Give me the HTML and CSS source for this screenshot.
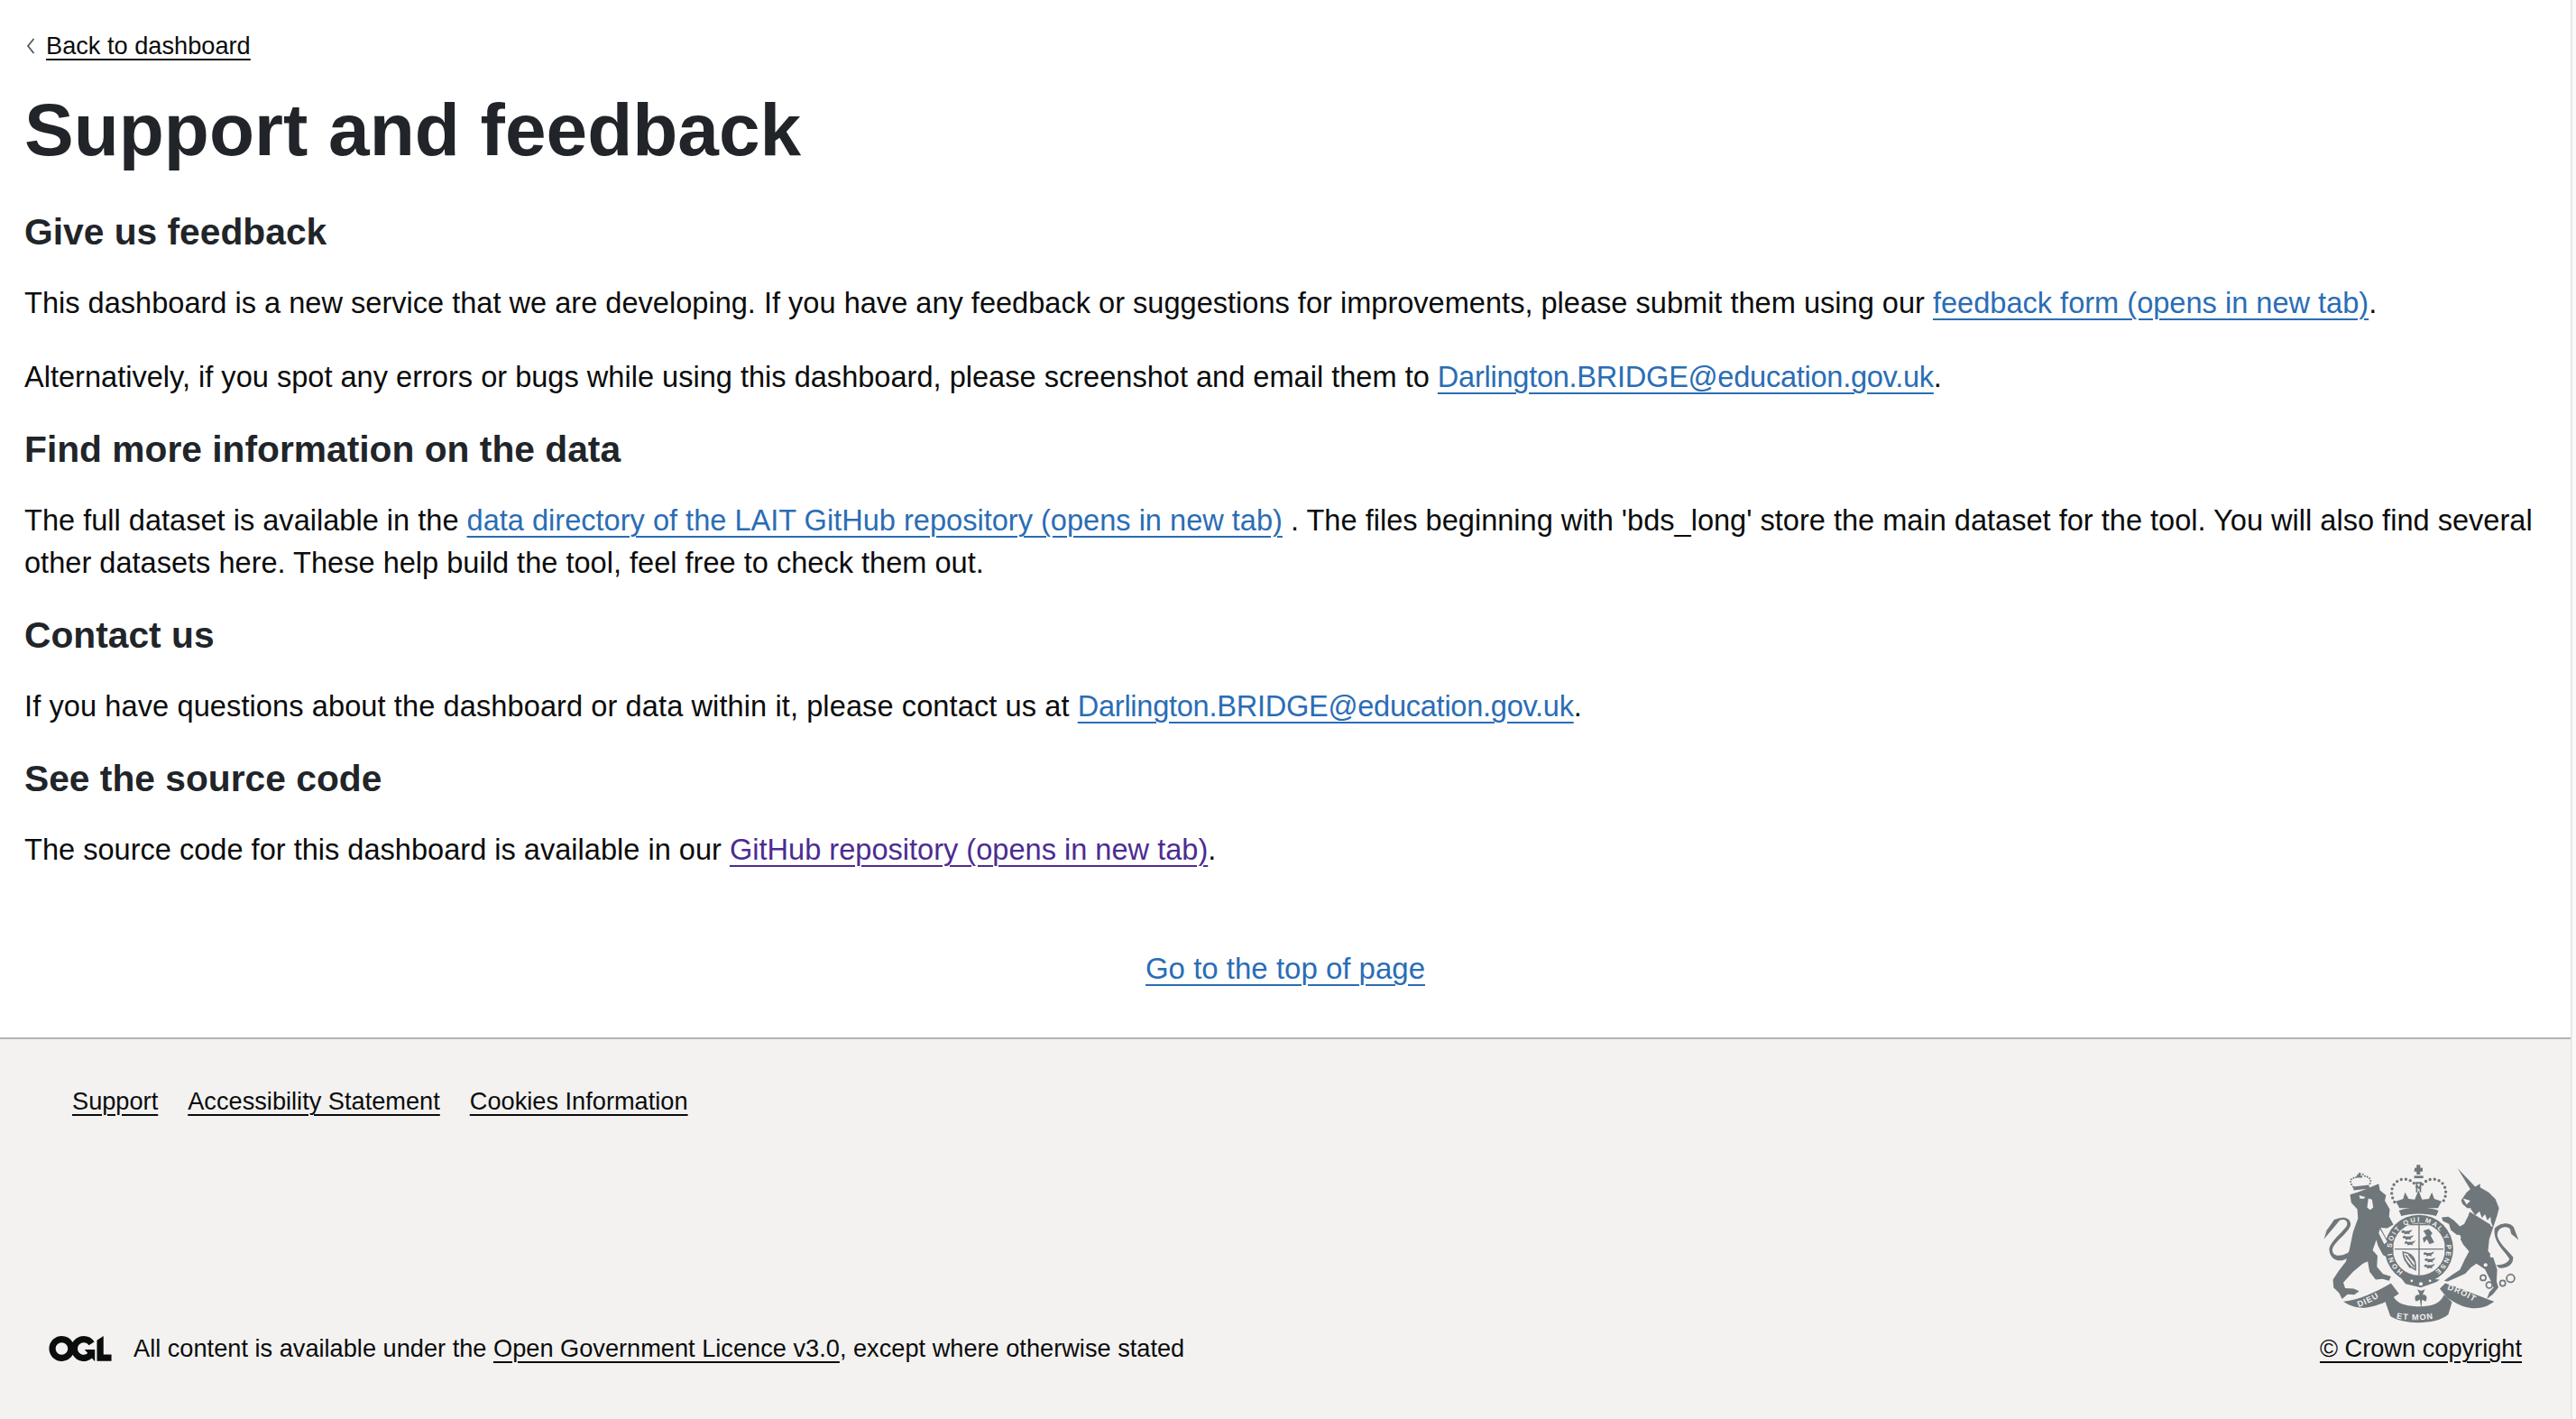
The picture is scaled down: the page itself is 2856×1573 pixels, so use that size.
FILE: index.html
```html
<!DOCTYPE html>
<html lang="en">
<head>
<meta charset="utf-8">
<title>Support and feedback</title>
<link rel="stylesheet" href="styles.css">
</head>
<body>
<div class="window">
  <div class="page">
    <main class="content">
      <div class="back">
        <svg class="chevron" viewBox="0 0 10 18" aria-hidden="true"><path d="M8.5 1 L2 9 L8.5 17" fill="none" stroke="#505a5f" stroke-width="1.8"/></svg>
        <a class="link-black" href="#">Back to dashboard</a>
      </div>
      <h1>Support and feedback</h1>
      <h2>Give us feedback</h2>
      <p>This dashboard is a new service that we are developing. If you have any feedback or suggestions for improvements, please submit them using our <a href="#">feedback form (opens in new tab)</a>.</p>
      <p>Alternatively, if you spot any errors or bugs while using this dashboard, please screenshot and email them to <a class="mail" href="#">Darlington.BRIDGE@education.gov.uk</a>.</p>
      <h2>Find more information on the data</h2>
      <p>The full dataset is available in the <a href="#">data directory of the LAIT GitHub repository (opens in new tab)</a> . The files beginning with 'bds_long' store the main dataset for the tool. You will also find several other datasets here. These help build the tool, feel free to check them out.</p>
      <h2>Contact us</h2>
      <p class="contact">If you have questions about the dashboard or data within it, please contact us at <a class="mail" href="#">Darlington.BRIDGE@education.gov.uk</a>.</p>
      <h2>See the source code</h2>
      <p>The source code for this dashboard is available in our <a class="visited" href="#">GitHub repository (opens in new tab)</a>.</p>
      <div class="top"><a href="#">Go to the top of page</a></div>
    </main>
    <footer class="footer">
      <nav class="foot-nav">
        <a class="link-black" href="#">Support</a>
        <a class="link-black" href="#">Accessibility Statement</a>
        <a class="link-black" href="#">Cookies Information</a>
      </nav>
      <div class="meta">
        <div class="licence">
          <svg class="ogl" viewBox="0 0 483.2 195.7" aria-hidden="true"><path fill="#0b0c0c" d="M421.5 142.8V.1l-50.7 32.3v161.1h112.4v-50.7zm-122.3-9.6A47.12 47.12 0 0 1 221 97.8c0-26 21.1-47.1 47.1-47.1 16.7 0 31.4 8.7 39.7 21.8l42.7-27.2A97.63 97.63 0 0 0 268.1 0c-36.5 0-68.3 20.1-85.1 49.7A98 98 0 0 0 97.8 0C43.9 0 0 43.9 0 97.8s43.9 97.8 97.8 97.8c36.5 0 68.3-20.1 85.1-49.7a97.76 97.76 0 0 0 149.6 25.4l19.4 22.2h3v-87.8h-80l24.3 27.5zM97.8 145c-26 0-47.1-21.1-47.1-47.1s21.1-47.1 47.1-47.1 47.2 21 47.2 47S123.8 145 97.8 145"/></svg>
          <span>All content is available under the <a class="link-black" href="#">Open Government Licence v3.0</a>, except where otherwise stated</span>
        </div>
        <div class="crown">
          <svg class="crest" viewBox="165 80 650 525" aria-hidden="true">
            <defs>
              <clipPath id="garter-clip"><circle cx="484" cy="362" r="86"/></clipPath>
              <path id="garter-path" d="M432 436 A90 90 0 1 1 536 436"/>
              <path id="dieu-path" d="M286 552 C320 540 350 524 382 500"/>
              <path id="mon-path" d="M410 589 C450 597 510 597 556 585"/>
              <path id="droit-path" d="M576 494 C610 506 650 522 690 552"/>
              <path id="leopard" d="M0 4 L6 0 L12 3 L26 2 L36 -2 L32 5 L26 9 L28 14 L20 12 L10 14 L10 9 L2 9 Z"/>
            </defs>
            <g class="crest-ink">
              <path d="M258 184 L282 176 L300 170 L352 148 L356 170 L376 186 L372 204 L388 232 L386 256 L400 282 L380 294 L358 292 L384 340 L398 362 L402 384 L388 392 L366 382 L350 352 L344 332 L332 366 L348 384 L346 420 L366 444 L392 452 L386 466 L364 460 L342 462 L322 436 L316 402 L300 410 L268 436 L236 472 L242 490 L270 492 L288 500 L272 512 L250 510 L232 526 L222 506 L204 488 L202 462 L222 432 L244 404 L256 364 L268 306 L284 262 L282 232 L262 210 Z"/>
              <path d="M250 392 C222 408 194 398 190 366 C188 340 236 306 248 284 C252 270 240 262 224 268 L206 290 L172 330 L184 296 L170 318 L206 266 C232 254 258 256 260 280 C260 306 206 336 200 364 C200 386 226 390 254 372 Z"/>
              <path class="crest-dots-small" d="M268 158 C252 140 262 126 276 130 C284 112 302 112 308 126 C322 122 332 140 320 152"/>
              <path d="M280 122 H286 V112 H292 V122 H298 V128 H280 Z"/>
              <path d="M268 158 L320 152 L322 164 L270 170 Z"/>
              <path d="M610 97 L668 158 L684 148 L684 160 L712 176 L734 198 L746 228 L740 252 L728 288 L714 330 L710 368 L728 392 L740 430 L738 468 L744 488 L726 510 L706 526 L714 504 L728 488 L716 460 L700 428 L672 410 L654 422 L636 442 L602 458 L578 468 L566 466 L590 448 L618 430 L634 396 L648 370 L628 346 L616 322 L588 300 L582 280 L562 270 L558 258 L580 256 L598 268 L618 288 L632 280 L652 240 L654 228 L642 228 L626 214 L622 202 L640 176 L652 166 Z"/>
              <path d="M732 294 C746 278 780 270 794 290 L810 332 L786 312 L782 296 C768 284 748 292 742 306 C732 332 776 366 792 388 C794 410 776 426 746 424 L736 414 C756 414 776 408 780 394 C768 372 724 340 732 294 Z"/>
              <path d="M470 96 L476 96 L476 86 L488 86 L488 96 L496 96 L496 108 L488 108 L488 118 L476 118 L476 108 L468 108 Z"/>
              <path d="M468 122 H498 V130 H468 Z"/>
              <path d="M474 146 H479 V176 H474 Z M486 146 H491 V176 H486 Z M472 142 H493 V148 H472 Z"/>
              <path class="crest-dots" d="M404 208 C382 172 400 135 435 133 C455 133 470 145 483 166 C496 145 511 133 531 133 C566 135 584 172 562 208"/>
              <path d="M408 206 L432 198 L438 176 L450 198 L470 200 L482 170 L494 200 L516 198 L526 176 L534 198 L558 206 L546 228 L420 228 Z"/>
              <path d="M418 236 C450 222 516 222 548 236 L540 254 C510 244 456 244 426 254 Z"/>
              <circle cx="484" cy="362" r="112"/>
              <circle class="crest-paper" cx="484" cy="362" r="86"/>
              <g clip-path="url(#garter-clip)">
                <path class="crest-line" d="M400 282 H568 M404 362 H564 M484 278 V462"/>
                <path class="crest-line" d="M398 276 H570 V380 C566 416 526 448 484 466 C442 448 402 416 398 380 Z"/>
                <use href="#leopard" x="426" y="300"/><use href="#leopard" x="430" y="318"/><use href="#leopard" x="436" y="336"/>
                <path d="M498 302 L516 296 L528 310 L522 318 L534 340 L518 346 L510 330 L500 342 L496 326 L508 318 Z"/>
                <use href="#leopard" x="498" y="372"/><use href="#leopard" x="502" y="392"/><use href="#leopard" x="500" y="412"/>
                <path class="crest-line-thick" d="M432 372 C462 376 474 392 472 430 C452 420 432 396 432 372 Z M440 382 L468 420 M450 380 L472 406 M436 394 L456 424"/>
              </g>
              <path d="M420 450 L552 462 L540 470 L490 488 L440 476 Z"/>
              <path d="M478 492 C484 500 498 500 504 492 L496 512 C506 510 514 518 506 534 L494 528 L491 558 L487 528 L474 534 C466 518 474 510 486 512 Z"/>
              <path d="M236 534 C290 528 340 504 392 474 L418 508 C398 522 384 530 372 536 C320 558 280 564 236 534 Z"/>
              <path d="M552 492 L570 474 C620 490 680 516 730 534 C690 566 640 560 600 536 L576 522 Z"/>
              <path d="M374 536 L398 514 C410 540 436 548 476 550 C520 552 552 544 566 512 L592 536 L580 576 C540 612 430 610 390 582 Z"/>
            </g>
            <g class="crest-light">
              <circle cx="490" cy="476" r="6"/><circle cx="460" cy="466" r="4"/><circle cx="520" cy="466" r="4"/>
              <path d="M318 196 L330 200 L334 226 L324 234 L314 226 Z"/>
              <path d="M288 186 L308 192 L302 198 L290 196 Z"/>
              <circle cx="624" cy="254" r="9"/><circle cx="612" cy="324" r="9"/><circle cx="726" cy="346" r="9"/><circle cx="722" cy="384" r="6"/><circle cx="702" cy="414" r="6"/>
              <path d="M642 240 L726 290 L720 274 L718 256 L708 268 L700 248 L690 260 L682 238 L668 252 L654 232 Z"/>
              <path d="M356 296 L380 338 L370 346 L352 310 Z"/>
              <path d="M628 196 L652 204 L640 216 Z"/>
            </g>
            <path class="crest-ink" d="M650 240 L718 282 L714 290 L646 250 Z"/>
            <g class="crest-rings">
              <circle cx="694" cy="456" r="9"/><circle cx="714" cy="480" r="10"/><circle cx="758" cy="474" r="9"/><circle cx="784" cy="458" r="13"/>
            </g>
            <text class="crest-garter"><textPath href="#garter-path" textLength="452">HONI SOIT QUI MAL Y PENSE</textPath></text>
            <text class="crest-motto"><textPath href="#dieu-path">DIEU</textPath></text>
            <text class="crest-motto"><textPath href="#mon-path">ET MON</textPath></text>
            <text class="crest-motto"><textPath href="#droit-path">DROIT</textPath></text>
          </svg>
          <a class="link-black" href="#">© Crown copyright</a>
        </div>
      </div>
    </footer>
  </div>
  <div class="scrollbar"></div>
</div>
</body>
</html>
```
FILE: styles.css
```css
* { box-sizing: border-box; }
html, body { margin: 0; padding: 0; }
body {
  font-family: "Liberation Sans", Arial, sans-serif;
  color: #0b0c0c;
  background: #fff;
  overflow: hidden;
}
.window { display: flex; height: 1573px; }
.page { flex: 1; min-width: 0; display: flex; flex-direction: column; }
.scrollbar { width: 6px; background: #fafafa; border-left: 2px solid #e8e8e8; }
.content { flex: 1; padding: 0 27px; }
.back { display: flex; align-items: center; gap: 12px; font-size: 27.2px; line-height: 34px; padding-top: 34px; padding-left: 2px; }
.chevron { width: 10px; height: 18px; }
a { color: #2a6db5; text-decoration: underline; text-decoration-thickness: 2px; text-underline-offset: 6px; }
a.link-black { color: #0b0c0c; text-underline-offset: 5px; }
a.visited { color: #4c2c92; }
a.mail { letter-spacing: -0.27px; }
h1 { margin: 26px 0 0; font-size: 82px; line-height: 100px; font-weight: 700; color: #212529; }
h2 { margin: 0 0 31px; font-size: 40.75px; line-height: 50px; font-weight: 700; color: #212529; }
h1 + h2 { margin-top: 38px; }
p { margin: 0 0 31px; font-size: 32.57px; line-height: 47px; }
p + p { margin-top: 35px; }
p.contact { letter-spacing: 0.09px; }
.top { text-align: center; font-size: 33px; line-height: 47px; margin-top: 84px; }
.footer { height: 423px; flex: none; background: #f3f2f1; border-top: 2px solid #b1b4b6; display: flex; flex-direction: column; padding: 0 54px; font-size: 27.2px; line-height: 34px; }
.foot-nav { display: flex; gap: 33px; padding: 52px 0 0 26px; }
.meta { margin-top: auto; display: flex; justify-content: space-between; align-items: flex-end; padding-bottom: 61px; }
.licence { display: flex; align-items: center; gap: 24px; }
.ogl { width: 70px; height: 28px; flex: none; }
.crown { display: flex; flex-direction: column; align-items: center; gap: 11px; }
.crest { width: 220px; height: 178px; display: block; }
.crest-ink { fill: #6f777b; }
.crest-light { fill: #f3f2f1; }
.crest-paper { fill: #f3f2f1; }
.crest-line { fill: none; stroke: #6f777b; stroke-width: 4; }
.crest-line-thick { fill: none; stroke: #6f777b; stroke-width: 5; }
.crest-dots { fill: none; stroke: #6f777b; stroke-width: 10; stroke-linecap: round; stroke-dasharray: 0 15; }
.crest-dots-small { fill: none; stroke: #6f777b; stroke-width: 6; stroke-linecap: round; stroke-dasharray: 0 9; }
.crest-rings { fill: none; stroke: #6f777b; stroke-width: 5; }
.crest-garter { font: 700 22px "Liberation Sans", Arial, sans-serif; fill: #f3f2f1; }
.crest-motto { font: 700 27px "Liberation Sans", Arial, sans-serif; fill: #f3f2f1; letter-spacing: 3px; }
```
